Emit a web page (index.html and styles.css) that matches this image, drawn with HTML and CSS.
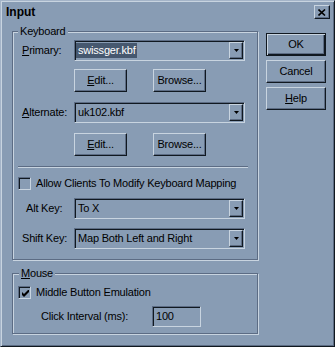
FILE: index.html
```html
<!DOCTYPE html>
<html>

<head>
    <link rel="stylesheet" href="styles.css">
</head>

<body>
    <div class="dialog">
        <div class="titlebar">
            <span class="title">Input</span>
            <button class="close" type="button">
                <svg width="8" height="7" viewBox="0 0 8 7"><path d="M0.5 0.5 L7 6.5 M7 0.5 L0.5 6.5" stroke="#000" stroke-width="1.6" /></svg>
            </button>
        </div>

        <div class="content">
            <div class="left">
                <fieldset class="group keyboard">
                    <legend>Keyboard</legend>

                    <div class="row">
                        <label class="lbl"><u>P</u>rimary:</label>
                        <div class="combo">
                            <span class="value"><span class="sel">swissger.kbf</span></span>
                            <span class="drop"><svg width="5" height="3" viewBox="0 0 5 3"><path d="M0 0 H5 L2.5 3 Z" fill="#000" /></svg></span>
                        </div>
                    </div>
                    <div class="btnrow first">
                        <button class="btn small" type="button"><u>E</u>dit...</button>
                        <button class="btn small" type="button">Browse...</button>
                    </div>

                    <div class="row spaced">
                        <label class="lbl"><u>A</u>lternate:</label>
                        <div class="combo">
                            <span class="value">uk102.kbf</span>
                            <span class="drop"><svg width="5" height="3" viewBox="0 0 5 3"><path d="M0 0 H5 L2.5 3 Z" fill="#000" /></svg></span>
                        </div>
                    </div>
                    <div class="btnrow">
                        <button class="btn small" type="button"><u>E</u>dit...</button>
                        <button class="btn small" type="button">Browse...</button>
                    </div>

                    <div class="separator"></div>

                    <div class="check allow">
                        <span class="box"></span>
                        <span>Allow Clients To Modify Keyboard Mapping</span>
                    </div>

                    <div class="row alt">
                        <label class="lbl indent">Alt Key:</label>
                        <div class="combo">
                            <span class="value">To X</span>
                            <span class="drop"><svg width="5" height="3" viewBox="0 0 5 3"><path d="M0 0 H5 L2.5 3 Z" fill="#000" /></svg></span>
                        </div>
                    </div>
                    <div class="row shift">
                        <label class="lbl">Shift Key:</label>
                        <div class="combo">
                            <span class="value">Map Both Left and Right</span>
                            <span class="drop"><svg width="5" height="3" viewBox="0 0 5 3"><path d="M0 0 H5 L2.5 3 Z" fill="#000" /></svg></span>
                        </div>
                    </div>
                </fieldset>

                <fieldset class="group mouse">
                    <legend><u>M</u>ouse</legend>

                    <div class="check">
                        <span class="box">
                            <svg width="7" height="7" viewBox="0 0 7 7"><path d="M0 2 L2 4 L7 -1 V2 L2 7 L0 5 Z" fill="#000" /></svg>
                        </span>
                        <span>Middle Button Emulation</span>
                    </div>

                    <div class="interval">
                        <label class="ilbl">Click Interval (ms):</label>
                        <div class="edit">100</div>
                    </div>
                </fieldset>
            </div>

            <div class="right">
                <button class="btn wide default" type="button">OK</button>
                <button class="btn wide" type="button">Cancel</button>
                <button class="btn wide" type="button"><u>H</u>elp</button>
            </div>
        </div>
    </div>
</body>

</html>
```

FILE: styles.css
```css
body {
    margin: 0;
    background: #889cb4;
}

.dialog {
    width: 335px;
    height: 347px;
    box-sizing: border-box;
    background: #889cb4;
    border: 1px solid;
    border-color: #a4b4c8 #101820 #101820 #a4b4c8;
    box-shadow: inset 1px 1px #c8d4e0, inset -1px -1px #5c6c84;
    font-family: 'Liberation Sans', Arial, sans-serif;
    font-size: 11px;
    line-height: 13px;
    letter-spacing: -0.2px;
    color: #000;
}

u {
    text-decoration: underline;
    text-underline-offset: 1px;
}

.titlebar {
    height: 24px;
    box-sizing: border-box;
    padding: 4px 4px 0 5px;
    display: flex;
    justify-content: space-between;
    align-items: flex-start;
}

.title {
    font-weight: bold;
    font-size: 12px;
    line-height: 14px;
    letter-spacing: 0;
}

.close {
    width: 16px;
    height: 14px;
    padding: 0;
    margin-top: 0;
    background: #889cb4;
    border: 1px solid;
    border-color: #c8d4e0 #101820 #101820 #c8d4e0;
    box-shadow: inset -1px -1px #5c6c84;
    display: flex;
    align-items: center;
    justify-content: center;
}

.content {
    display: flex;
    gap: 8px;
    padding: 0 8px 0 11px;
}

.left {
    width: 246px;
}

.right {
    width: 60px;
    margin-top: 8px;
    display: flex;
    flex-direction: column;
    gap: 4px;
}

/* group boxes */
.group {
    margin: 0;
    min-width: 0;
    border: 1px solid #5c6c84;
    box-shadow: inset 1px 1px #c8d4e0, 1px 1px #c8d4e0;
}

.group legend {
    padding: 0 2px;
    background: #889cb4;
    line-height: 13px;
}

.keyboard {
    padding: 2px 12px 10px 9px;
}

.keyboard legend {
    margin-left: -4px;
}

.mouse {
    margin-top: 7px;
    padding: 6px 12px 6px 5px;
}

.mouse legend {
    margin-left: 1px;
}

.row {
    display: flex;
    align-items: center;
    height: 21px;
}

.row.spaced {
    margin-top: 10px;
}

.row.alt {
    margin-top: 8px;
}

.row.shift {
    margin-top: 9px;
}

.lbl {
    width: 52px;
    flex: none;
    white-space: nowrap;
}

.lbl.indent {
    padding-left: 4px;
    box-sizing: border-box;
}

/* combo boxes and edits */
.combo,
.edit {
    box-sizing: border-box;
    height: 21px;
    border: 1px solid;
    border-color: #5c6c84 #c8d4e0 #c8d4e0 #5c6c84;
    box-shadow: inset 1px 1px #101820;
    background: #889cb4;
}

.combo {
    width: 171px;
    display: flex;
    align-items: stretch;
    padding: 1px;
}

.combo .value {
    flex: 1;
    display: flex;
    align-items: center;
    padding-left: 2px;
    white-space: nowrap;
}

.combo .sel {
    background: #46586f;
    color: #fff;
    padding: 1px 1px 1px 2px;
    margin-left: -2px;
}

.drop {
    width: 14px;
    box-sizing: border-box;
    border: 1px solid;
    border-color: #c8d4e0 #101820 #101820 #c8d4e0;
    box-shadow: inset -1px -1px #5c6c84;
    display: flex;
    align-items: center;
    justify-content: center;
    padding-bottom: 1px;
}

.drop svg {
    display: block;
}

/* push buttons */
.btn {
    box-sizing: border-box;
    height: 23px;
    padding: 0;
    font: inherit;
    letter-spacing: inherit;
    color: #000;
    background: #889cb4;
    border: 1px solid;
    border-color: #c8d4e0 #101820 #101820 #c8d4e0;
    box-shadow: inset -1px -1px #5c6c84;
}

.btn.small {
    width: 53px;
}

.btn.wide {
    width: 60px;
}

.btn.default {
    border: 1px solid #101820;
    box-shadow: inset 1px 1px #c8d4e0, inset -1px -1px #101820, inset -2px -2px #5c6c84;
}

.btnrow {
    display: flex;
    gap: 26px;
    margin-top: 10px;
    padding-left: 52px;
}

.btnrow.first {
    margin-top: 8px;
}

.separator {
    height: 0;
    margin: 10px -3px 0 -4px;
    border-top: 1px solid #5c6c84;
    border-bottom: 1px solid #c8d4e0;
}

/* check boxes */
.check {
    display: flex;
    align-items: center;
    gap: 5px;
    height: 13px;
    white-space: nowrap;
}

.check.allow {
    margin: 9px 0 0 -4px;
}

.box {
    width: 13px;
    height: 13px;
    box-sizing: border-box;
    flex: none;
    border: 1px solid;
    border-color: #5c6c84 #c8d4e0 #c8d4e0 #5c6c84;
    box-shadow: inset 1px 1px #101820;
    display: flex;
    align-items: center;
    justify-content: center;
    padding: 1px 0 0 1px;
}

.box svg {
    display: block;
}

.interval {
    display: flex;
    align-items: center;
    margin-top: 7px;
}

.ilbl {
    width: 134px;
    padding-left: 23px;
    box-sizing: border-box;
    flex: none;
    white-space: nowrap;
}

.edit {
    width: 49px;
    padding: 3px 0 0 3px;
}
```
